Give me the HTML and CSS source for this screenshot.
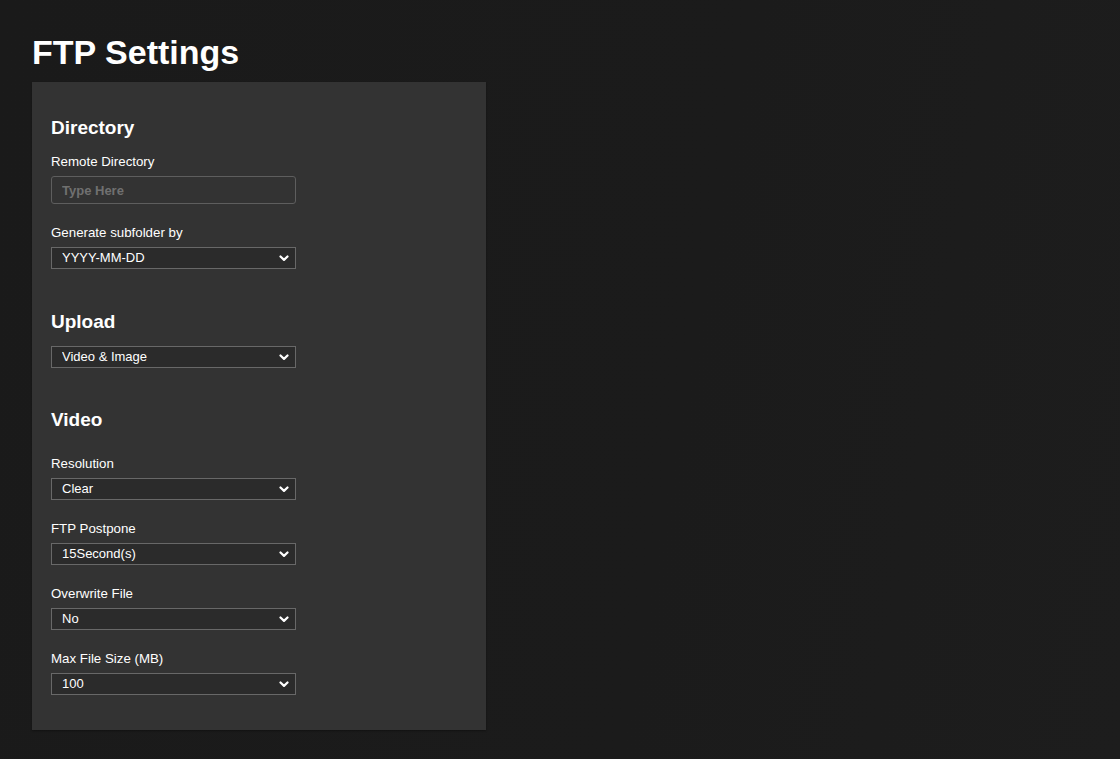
FILE: index.html
```html
<!DOCTYPE html>
<html lang="en">
<head>
<meta charset="utf-8">
<title>FTP Settings</title>
<link rel="stylesheet" href="styles.css">
</head>
<body>
<main class="page">
  <h1 class="title">FTP Settings</h1>
  <div class="panel">
    <section class="section section-directory">
      <h2 class="heading">Directory</h2>
      <div class="field">
        <label class="label" for="remote">Remote Directory</label>
        <input class="text-input" id="remote" type="text" placeholder="Type Here">
      </div>
      <div class="field">
        <label class="label" for="subfolder">Generate subfolder by</label>
        <div class="select-wrap">
          <select class="select" id="subfolder"><option>YYYY-MM-DD</option></select>
          <svg class="chevron" viewBox="0 0 10 7" width="10" height="7"><path d="M1.5 1.5 L5 4.9 L8.5 1.5" fill="none" stroke="#fff" stroke-width="2.2" stroke-linecap="round" stroke-linejoin="round"/></svg>
        </div>
      </div>
    </section>

    <section class="section section-upload">
      <h2 class="heading">Upload</h2>
      <div class="field">
        <div class="select-wrap">
          <select class="select"><option>Video &amp; Image</option></select>
          <svg class="chevron" viewBox="0 0 10 7" width="10" height="7"><path d="M1.5 1.5 L5 4.9 L8.5 1.5" fill="none" stroke="#fff" stroke-width="2.2" stroke-linecap="round" stroke-linejoin="round"/></svg>
        </div>
      </div>
    </section>

    <section class="section section-video">
      <h2 class="heading">Video</h2>
      <div class="field">
        <label class="label">Resolution</label>
        <div class="select-wrap">
          <select class="select"><option>Clear</option></select>
          <svg class="chevron" viewBox="0 0 10 7" width="10" height="7"><path d="M1.5 1.5 L5 4.9 L8.5 1.5" fill="none" stroke="#fff" stroke-width="2.2" stroke-linecap="round" stroke-linejoin="round"/></svg>
        </div>
      </div>
      <div class="field">
        <label class="label">FTP Postpone</label>
        <div class="select-wrap">
          <select class="select"><option>15Second(s)</option></select>
          <svg class="chevron" viewBox="0 0 10 7" width="10" height="7"><path d="M1.5 1.5 L5 4.9 L8.5 1.5" fill="none" stroke="#fff" stroke-width="2.2" stroke-linecap="round" stroke-linejoin="round"/></svg>
        </div>
      </div>
      <div class="field">
        <label class="label">Overwrite File</label>
        <div class="select-wrap">
          <select class="select"><option>No</option></select>
          <svg class="chevron" viewBox="0 0 10 7" width="10" height="7"><path d="M1.5 1.5 L5 4.9 L8.5 1.5" fill="none" stroke="#fff" stroke-width="2.2" stroke-linecap="round" stroke-linejoin="round"/></svg>
        </div>
      </div>
      <div class="field">
        <label class="label">Max File Size (MB)</label>
        <div class="select-wrap">
          <select class="select"><option>100</option></select>
          <svg class="chevron" viewBox="0 0 10 7" width="10" height="7"><path d="M1.5 1.5 L5 4.9 L8.5 1.5" fill="none" stroke="#fff" stroke-width="2.2" stroke-linecap="round" stroke-linejoin="round"/></svg>
        </div>
      </div>
    </section>
  </div>
</main>
</body>
</html>
```

FILE: styles.css
```css
* { box-sizing: border-box; }

html, body {
  margin: 0;
  height: 100%;
}

body {
  background: linear-gradient(100deg, #1a1a1a 0%, #1b1b1b 60%, #1d1d1d 100%);
  color: #fff;
  font-family: "Liberation Sans", Arial, sans-serif;
}

.page {
  padding: 32px 0 0 32px;
}

.title {
  margin: 0 0 10px 0;
  font-size: 34px;
  line-height: 40px;
  font-weight: bold;
  color: #fff;
}

.panel {
  width: 454px;
  background: #333333;
  padding: 35px 19px 35px 19px;
  box-shadow: 0 1px 2px rgba(0,0,0,0.35);
}

.section + .section {
  margin-top: 42px;
}

.heading {
  margin: 0;
  font-size: 19px;
  line-height: 22px;
  font-weight: bold;
  color: #fff;
}

.section-directory .heading { margin-bottom: 15px; }
.section-upload .heading { margin-bottom: 13px; }
.section + .section-video { margin-top: 41px; }
.section-video .heading { margin-bottom: 25px; }

.field {
  display: flex;
  flex-direction: column;
  width: 245px;
}

.field + .field {
  margin-top: 21px;
}

.label {
  display: block;
  font-size: 13.3px;
  line-height: 16px;
  margin-bottom: 6px;
  color: #fff;
}

.text-input {
  width: 245px;
  height: 28px;
  margin: 0;
  padding: 0 10px;
  background: #333333;
  border: 1px solid #5e5e5e;
  border-radius: 3px;
  color: #fff;
  font-family: "Liberation Sans", Arial, sans-serif;
  font-size: 13px;
  outline: none;
}

.text-input::placeholder {
  color: #707070;
  font-weight: bold;
}

.select-wrap {
  position: relative;
  width: 245px;
  height: 22px;
}

.select {
  -webkit-appearance: none;
  appearance: none;
  display: block;
  width: 245px;
  height: 22px;
  margin: 0;
  padding: 0 24px 0 10px;
  background: #2b2b2b;
  border: 1px solid #686868;
  border-radius: 0;
  color: #fff;
  font-family: "Liberation Sans", Arial, sans-serif;
  font-size: 13px;
  line-height: 20px;
  outline: none;
}

.chevron {
  position: absolute;
  right: 7px;
  top: 8px;
  pointer-events: none;
}
```
